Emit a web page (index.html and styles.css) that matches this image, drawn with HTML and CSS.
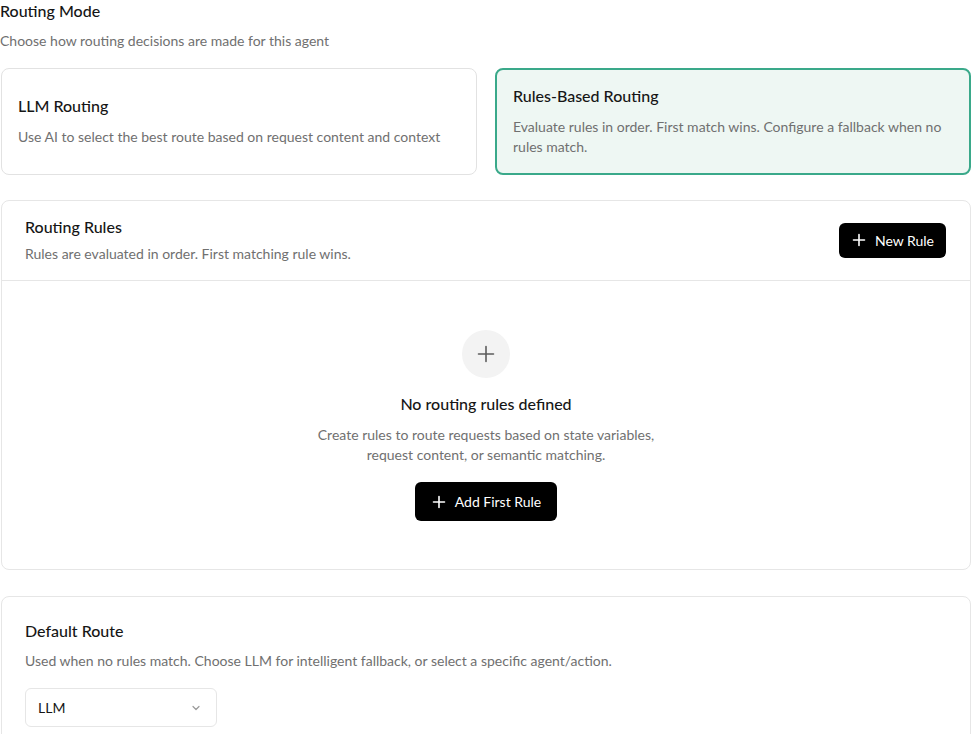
FILE: index.html
```html
<!DOCTYPE html>
<html lang="en">
<head>
    <meta charset="UTF-8">
    <meta name="viewport" content="width=device-width, initial-scale=1.0">
    <title>Routing Settings</title>
    <link rel="stylesheet" href="styles.css">
</head>
<body>
    <div class="page">
        <div class="section-head">
            <h2>Routing Mode</h2>
            <p class="muted">Choose how routing decisions are made for this agent</p>
        </div>

        <div class="mode-grid">
            <div class="mode-card">
                <h3>LLM Routing</h3>
                <p class="muted">Use AI to select the best route based on request content and context</p>
            </div>
            <div class="mode-card selected">
                <h3>Rules-Based Routing</h3>
                <p class="muted">Evaluate rules in order. First match wins. Configure a fallback when no rules match.</p>
            </div>
        </div>

        <div class="panel">
            <div class="panel-header">
                <div>
                    <h3>Routing Rules</h3>
                    <p class="muted">Rules are evaluated in order. First matching rule wins.</p>
                </div>
                <button class="btn-dark">
                    <svg width="14" height="14" viewBox="0 0 14 14"><path d="M7 1.5v11M1.5 7h11" stroke="currentColor" stroke-width="1.6" stroke-linecap="round"/></svg>
                    New Rule
                </button>
            </div>
            <div class="empty-state">
                <div class="empty-icon">
                    <svg width="18" height="18" viewBox="0 0 18 18"><path d="M9 1.5v15M1.5 9h15" stroke="currentColor" stroke-width="1.6" stroke-linecap="round"/></svg>
                </div>
                <h4>No routing rules defined</h4>
                <p class="muted">Create rules to route requests based on state variables, request content, or semantic matching.</p>
                <button class="btn-dark">
                    <svg width="14" height="14" viewBox="0 0 14 14"><path d="M7 1.5v11M1.5 7h11" stroke="currentColor" stroke-width="1.6" stroke-linecap="round"/></svg>
                    Add First Rule
                </button>
            </div>
        </div>

        <div class="panel default-route">
            <h3>Default Route</h3>
            <p class="muted">Used when no rules match. Choose LLM for intelligent fallback, or select a specific agent/action.</p>
            <div class="select">
                <span>LLM</span>
                <svg width="12" height="12" viewBox="0 0 12 12"><path d="M3 4.5l3 3 3-3" fill="none" stroke="currentColor" stroke-width="1.2" stroke-linecap="round" stroke-linejoin="round"/></svg>
            </div>
        </div>
    </div>
</body>
</html>
```

FILE: styles.css
```css
body {
    margin: 0;
    font-family: Lato, "Noto Sans", sans-serif;
    color: #161616;
    background: #fff;
}
h2, h3, h4, p {
    margin: 0;
}
.page {
    padding: 0 1px;
}
.muted {
    font-size: 14px;
    line-height: 20px;
    color: #707070;
}
.section-head h2 {
    margin-left: -1px;
    font-size: 16px;
    font-weight: 500;
    line-height: 22px;
}
.section-head .muted {
    margin-left: -1px;
    margin-top: 9px;
}
.mode-grid {
    display: grid;
    grid-template-columns: 1fr 1fr;
    gap: 18px;
    margin-top: 17px;
}
.mode-card {
    border: 1px solid #e2e2e2;
    border-radius: 8px;
    padding: 16px 16px 18px;
    display: flex;
    flex-direction: column;
    justify-content: center;
}
.mode-card h3 {
    font-size: 16px;
    font-weight: 500;
    line-height: 22px;
}
.mode-card .muted {
    margin-top: 10px;
}
.mode-card.selected {
    border: 2px solid #3aa98a;
    background: #eef7f3;
    padding: 15px 16px 16px;
}
.panel {
    border: 1px solid #e6e6e6;
    border-radius: 8px;
    margin-top: 25px;
}
.panel h3 {
    font-size: 16px;
    font-weight: 500;
    line-height: 22px;
}
.panel-header {
    display: flex;
    justify-content: space-between;
    align-items: center;
    padding: 15px 24px 16px 23px;
    border-bottom: 1px solid #e6e6e6;
}
.panel-header .muted {
    margin-top: 6px;
}
.btn-dark {
    display: inline-flex;
    align-items: center;
    gap: 9px;
    background: #000;
    color: #fff;
    border: none;
    border-radius: 6px;
    font-family: inherit;
    font-size: 14px;
    height: 35px;
    padding: 0 12px 0 13px;
    cursor: pointer;
}
.empty-state {
    display: flex;
    flex-direction: column;
    align-items: center;
    text-align: center;
    padding: 49px 24px 48px;
}
.empty-icon {
    width: 48px;
    height: 48px;
    border-radius: 50%;
    background: #f3f3f3;
    color: #5c5c5c;
    display: flex;
    align-items: center;
    justify-content: center;
}
.empty-state h4 {
    margin-top: 14px;
    font-size: 16px;
    font-weight: 500;
    line-height: 24px;
}
.empty-state .muted {
    margin-top: 9px;
    max-width: 360px;
}
.empty-state .btn-dark {
    margin-top: 17px;
    height: 39px;
    padding: 0 16px 0 17px;
}
.default-route {
    margin-top: 26px;
    padding: 23px 24px 24px 23px;
}
.default-route .muted {
    margin-top: 9px;
}
.select {
    margin-top: 17px;
    width: 192px;
    height: 39px;
    box-sizing: border-box;
    border: 1px solid #e6e6e6;
    border-radius: 6px;
    display: flex;
    align-items: center;
    justify-content: space-between;
    padding: 0 14px 0 12px;
    font-size: 14px;
    color: #9a9a9a;
}
.select span {
    color: #161616;
}
```
